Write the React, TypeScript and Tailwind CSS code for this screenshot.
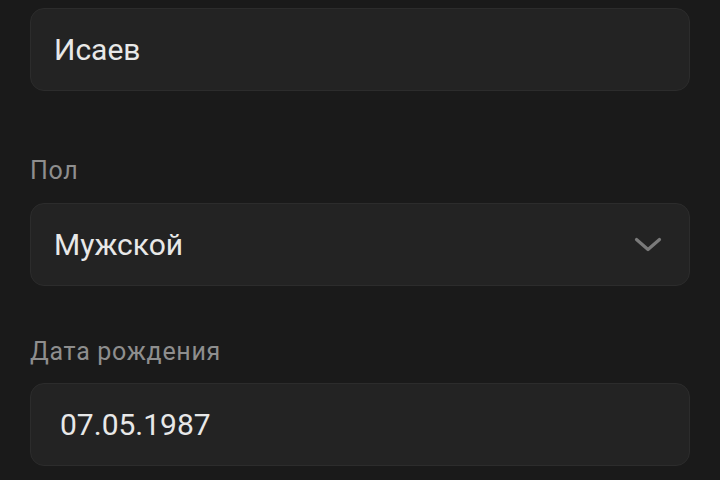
import React from "react";

const font = { fontFamily: "Roboto, 'Noto Sans', sans-serif" };

function Box({ children, className = "" }: { children: React.ReactNode; className?: string }) {
  return (
    <div
      className={`h-[83px] rounded-[14px] border border-[#2c2c2c] bg-[#232323] flex items-center ${className}`}
    >
      {children}
    </div>
  );
}

export default function App() {
  return (
    <div className="w-[720px] h-[480px] overflow-hidden bg-[#1a1a1a] px-[30px] pt-[8px]" style={font}>
      <Box className="pl-[23px]">
        <span className="text-[30px] leading-none text-[#e8e8e8]">Исаев</span>
      </Box>

      <div className="mt-[64px] text-[25px] leading-[32px] tracking-[0.7px] text-[#8e8e8e]">Пол</div>
      <Box className="mt-[16px] pl-[23px] pr-[27px] justify-between">
        <span className="text-[30px] leading-none text-[#e8e8e8]">Мужской</span>
        <svg width="28" height="16" viewBox="0 0 28 16" fill="none">
          <path d="M2.5 2.5 L14 12.5 L25.5 2.5" stroke="#7a7a7a" strokeWidth="3.2" strokeLinecap="round" strokeLinejoin="round" />
        </svg>
      </Box>

      <div className="mt-[50px] text-[25px] leading-[32px] tracking-[0.7px] text-[#8e8e8e]">Дата рождения</div>
      <Box className="mt-[15px] pl-[29px]">
        <span className="text-[30px] leading-none text-[#e8e8e8]">07.05.1987</span>
      </Box>
    </div>
  );
}
